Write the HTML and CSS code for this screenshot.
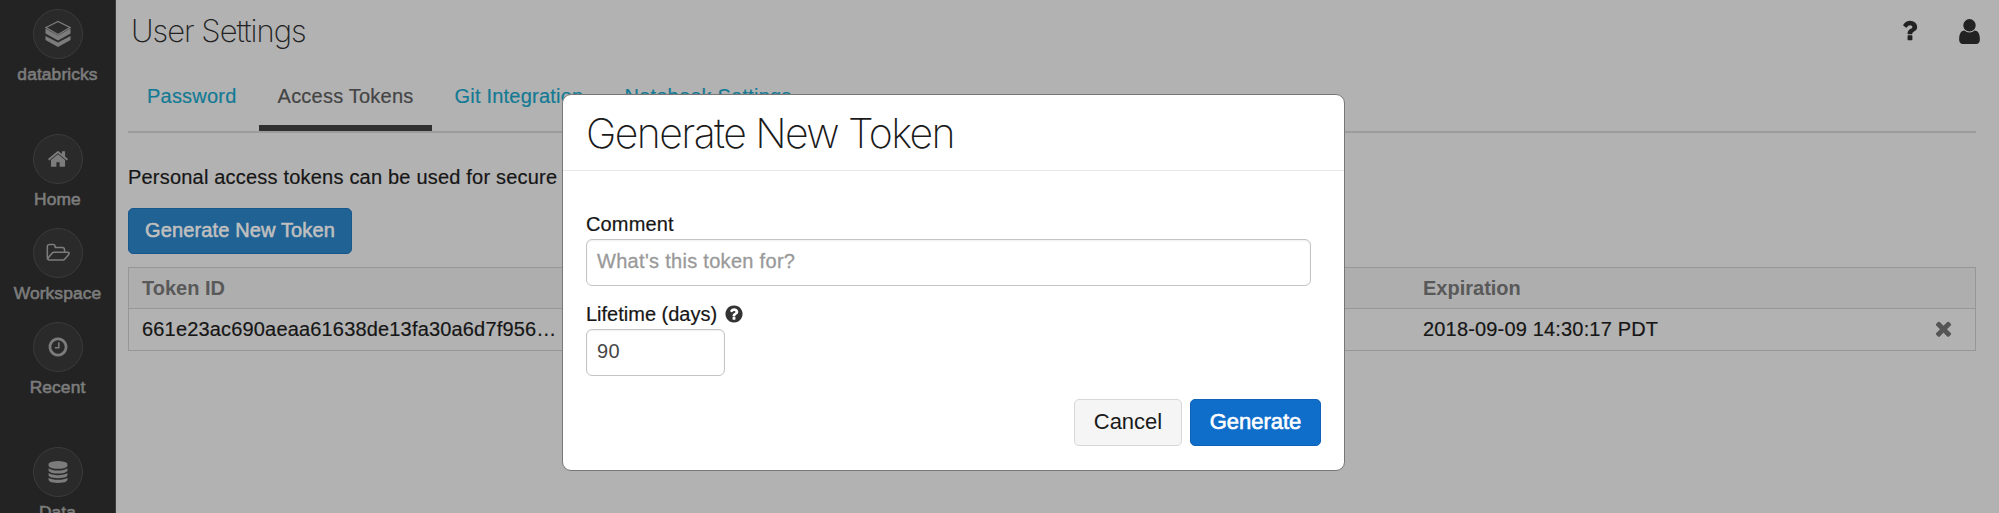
FILE: index.html
```html
<!DOCTYPE html>
<html lang="en">
<head>
<meta charset="utf-8">
<title>User Settings</title>
<link rel="stylesheet" href="styles.css">
</head>
<body>
<div class="app">
  <nav class="sidebar">
    <a class="nav-item nav-brand"><span class="nav-circle"><svg width="26" height="28" viewBox="0 0 26 28"><path d="M1 7.5 13 1.5 25 7.5 13 14.5Z" fill="none" stroke="currentColor" stroke-width="1.3"/><path d="M.5 8.500 13 15.500 25.500 8.500V13.500L13 20.500.5 13.500ZM.5 16 13 22.500 25.500 16V20L13 27 .5 20Z" fill="currentColor"/></svg></span><span class="nav-label">databricks</span></a>
    <a class="nav-item nav-home"><span class="nav-circle"><svg class="icon" viewBox="0 0 1792 1792"><path d="M1472 992v480q0 26-19 45t-45 19h-384v-384h-256v384h-384q-26 0-45-19t-19-45v-480q0-1 .5-3t.5-3l575-474 575 474q1 2 1 6zm223-69l-62 74q-8 9-21 11h-3q-13 0-21-7l-692-577-692 577q-12 8-24 7-13-2-21-11l-62-74q-8-10-7-23.5t11-21.5l719-599q32-26 76-26t76 26l244 204v-195q0-14 9-23t23-9h192q14 0 23 9t9 23v408l219 182q10 8 11 21.500t-7 23.500z"/></svg></span><span class="nav-label">Home</span></a>
    <a class="nav-item"><span class="nav-circle"><svg class="icon icon-wide" viewBox="-64 0 2048 1792"><path d="M1845 931q0-35-53-35h-1088q-40 0-85.500 21.500t-71.500 52.500l-294 363q-18 24-18 40 0 35 53 35h1088q40 0 86-22t71-53l294-363q18-22 18-39zm-1141-163h768v-160q0-40-28-68t-68-28h-576q-40 0-68-28t-28-68v-64q0-40-28-68t-68-28h-320q-40 0-68 28t-28 68v853l256-315q44-53 116-87.500t140-34.500zm1269 163q0 62-46 120l-295 363q-43 53-116 87.500t-140 34.500h-1088q-92 0-158-66t-66-158v-960q0-92 66-158t158-66h320q92 0 158 66t66 158v32h544q92 0 158 66t66 158v160h192q54 0 99 24.500t67 70.500q15 32 15 68z"/></svg></span><span class="nav-label">Workspace</span></a>
    <a class="nav-item"><span class="nav-circle"><svg class="icon" viewBox="0 0 1792 1792"><path d="M1024 544v448q0 14-9 23t-23 9h-320q-14 0-23-9t-9-23v-64q0-14 9-23t23-9h224v-352q0-14 9-23t23-9h64q14 0 23 9t9 23zm416 352q0-148-73-273t-198-198-273-73-273 73-198 198-73 273 73 273 198 198 273 73 273-73 198-198 73-273zm224 0q0 209-103 385.500t-279.500 279.500-385.500 103-385.500-103-279.500-279.500-103-385.500 103-385.500 279.500-279.500 385.500-103 385.500 103 279.500 279.500 103 385.500z"/></svg></span><span class="nav-label">Recent</span></a>
    <a class="nav-item nav-data"><span class="nav-circle"><svg class="icon" viewBox="0 0 1792 1792"><path d="M896 768q237 0 443-43t325-127v170q0 69-103 128t-280 93.500-385 34.500-385-34.500-280-93.500-103-128v-170q119 84 325 127t443 43zm0 768q237 0 443-43t325-127v170q0 69-103 128t-280 93.500-385 34.500-385-34.500-280-93.500-103-128v-170q119 84 325 127t443 43zm0-384q237 0 443-43t325-127v170q0 69-103 128t-280 93.500-385 34.500-385-34.500-280-93.500-103-128v-170q119 84 325 127t443 43zm0-1152q208 0 385 34.500t280 93.500 103 128v128q0 69-103 128t-280 93.500-385 34.500-385-34.500-280-93.500-103-128v-128q0-69 103-128t280-93.500 385-34.500z"/></svg></span><span class="nav-label">Data</span></a>
  </nav>
  <main class="main">
    <header class="topbar">
      <h1 class="page-title">User Settings</h1>
      <div class="top-icons">
        <svg class="icon-help" viewBox="0 0 1792 1792"><path d="M1088 1256v240q0 16-12 28t-28 12h-240q-16 0-28-12t-12-28v-240q0-16 12-28t28-12h240q16 0 28 12t12 28zm316-600q0 54-15.500 101t-35 76.500-55 59.500-57.500 43.500-61 35.500q-41 23-68.500 65t-27.500 67q0 17-12 32.500t-28 15.500h-240q-15 0-25.500-18.500t-10.500-37.500v-45q0-83 65-156.500t143-108.500q59-27 84-56t25-76q0-42-46.500-74t-107.500-32q-65 0-108 29-35 25-107 115-13 16-31 16-12 0-25-8l-164-125q-13-10-15.500-25t5.500-28q160-266 464-266 80 0 161 31t146 83 106 127.500 41 158.500z"/></svg>
        <svg class="icon-user" viewBox="0 0 1792 1792"><path d="M1536 1399q0 109-62.500 187t-150.500 78h-854q-88 0-150.500-78t-62.500-187q0-85 8.500-160.500t31.500-152 58.500-131 94-89 134.500-34.500q131 128 313 128t313-128q76 0 134.500 34.500t94 89 58.500 131 31.500 152 8.500 160.500zm-256-887q0 159-112.500 271.500t-271.500 112.500-271.500-112.500-112.500-271.500 112.500-271.500 271.500-112.500 271.500 112.500 112.500 271.500z"/></svg>
      </div>
    </header>
    <div class="tabs">
      <a class="tab">Password</a>
      <a class="tab tab-active">Access Tokens</a>
      <a class="tab">Git Integration</a>
      <a class="tab">Notebook Settings</a>
    </div>
    <p class="intro">Personal access tokens can be used for secure</p>
    <button class="btn-open">Generate New Token</button>
    <div class="table">
      <div class="row row-head"><span>Token ID</span><span>Expiration</span></div>
      <div class="row"><span class="token">661e23ac690aeaa61638de13fa30a6d7f956…</span><span class="date">2018-09-09 14:30:17 PDT</span><svg class="icon-remove" viewBox="0 0 1792 1792"><path d="M1490 1322q0 40-28 68l-136 136q-28 28-68 28t-68-28l-294-294-294 294q-28 28-68 28t-68-28l-136-136q-28-28-28-68t28-68l294-294-294-294q-28-28-28-68t28-68l136-136q28-28 68-28t68 28l294 294 294-294q28-28 68-28t68 28l136 136q28 28 28 68t-28 68l-294 294 294 294q28 28 28 68z"/></svg></div>
    </div>
  </main>
</div>
<div class="modal">
  <h2 class="modal-title">Generate New Token</h2>
  <div class="modal-body">
    <label class="label" for="comment">Comment</label>
    <input class="field" id="comment" placeholder="What's this token for?">
    <label class="label label-life" for="days">Lifetime (days)<svg class="icon-info" viewBox="0 0 1792 1792"><path d="M1024 1376v-192q0-14-9-23t-23-9h-192q-14 0-23 9t-9 23v192q0 14 9 23t23 9h192q14 0 23-9t9-23zm256-672q0-88-55.500-163t-138.500-116-170-41q-243 0-371 213-15 24 8 42l132 100q7 6 19 6 16 0 25-12 53-68 86-92 34-24 86-24 48 0 85.500 26t37.500 59q0 38-20 61t-68 45q-63 28-115.500 86.500t-52.500 125.500v36q0 14 9 23t23 9h192q14 0 23-9t9-23q0-19 21.500-49.500t54.500-49.500q32-18 49-28.500t46-35 44.500-48 28-60.500 12.500-81zm384 192q0 209-103 385.500t-279.500 279.500-385.500 103-385.500-103-279.500-279.500-103-385.500 103-385.500 279.500-279.500 385.500-103 385.500 103 279.500 279.500 103 385.500z"/></svg></label>
    <input class="field field-days" id="days" value="90">
  </div>
  <div class="modal-actions"><button class="btn btn-cancel">Cancel</button><button class="btn btn-primary">Generate</button></div>
</div>
</body>
</html>
```
FILE: styles.css
```css
* { box-sizing: border-box; }
body {
  margin: 0;
  height: 513px;
  overflow: hidden;
  background: #b2b2b2;
  color: #161616;
  font: 20px/28px "Liberation Sans", Arial, sans-serif;
}
svg { fill: currentColor; display: block; flex: none; }
button, input { font: inherit; margin: 0; }
.app { display: flex; height: 513px; overflow: hidden; }

.sidebar {
  flex: none;
  width: 116px;
  height: 513px;
  overflow: hidden;
  padding-top: 9px;
  background: #232323;
  border-right: 1px solid #3a3a3a;
  color: #7c7c7c;
}
.nav-item { display: flex; flex-direction: column; align-items: center; height: 94px; }
.nav-brand { height: 125px; }
.nav-item:nth-child(4) { height: 125px; }
.nav-circle {
  display: flex;
  align-items: center;
  justify-content: center;
  width: 50px;
  height: 50px;
  border: 1.5px solid #3b3b3b;
  border-radius: 50%;
  background: #2a2a2a;
}
.nav-label { margin-top: 3px; font-size: 17.400px; line-height: 24px; letter-spacing: .1px; -webkit-text-stroke: .6px; }
.icon { width: 22px; height: 22px; }
.icon-wide { width: 25px; }

.main { flex: 1; padding: 0 23px 0 12px; }
.topbar { display: flex; justify-content: space-between; height: 65px; padding-left: 3px; }
.page-title { margin: 9px 0 0; font: 200 31px/44px Inter, sans-serif; letter-spacing: -1px; color: #222; }
.top-icons { display: flex; align-items: flex-start; gap: 32px; margin: 17px -8px 0 0; color: #222; }
.icon-help { width: 27px; height: 27px; }
.icon-user { width: 29px; height: 29px; }
.tabs { display: flex; height: 68px; border-bottom: 2px solid #9c9c9c; color: #127a94; }
.tab { height: 66px; padding: 17px 19px 0; margin-right: 3px; white-space: nowrap; letter-spacing: .22px; -webkit-text-stroke: .2px; }
.tab-active { color: #444; border-bottom: 6px solid #303030; }
.intro { margin: 30px 0 17px; white-space: nowrap; letter-spacing: .2px; -webkit-text-stroke: .2px; }
.btn-open {
  display: block;
  width: 224px;
  height: 46px;
  padding: 0 0 2px;
  border: 1.5px solid #17588c;
  border-radius: 5px;
  background: #206294;
  color: #bfbfbf;
  letter-spacing: .13px;
  -webkit-text-stroke: .6px;
}
.table { margin-top: 13px; border: 1.500px solid #969696; height: 84px; }
.row { display: grid; grid-template-columns: 1281px 1fr auto; align-items: center; height: 42px; padding: 0 20px 3px 13px; }
.row-head { height: 41px; padding-top: 3px; border-bottom: 1px solid #969696; background: #aeaeae; color: #595959; font-weight: bold; }
.token, .date { letter-spacing: .17px; -webkit-text-stroke: .2px; }
.icon-remove { width: 23px; height: 23px; color: #555; }

.modal {
  position: absolute;
  left: 562px;
  top: 94px;
  width: 783px;
  height: 377px;
  border: 1px solid #777;
  border-radius: 9px;
  background: #fff;
}
.modal-title {
  margin: 0;
  height: 76px;
  padding: 14px 0 0 23px;
  border-bottom: 1px solid #e8e8e8;
  font: 200 41px/48px Inter, sans-serif;
  letter-spacing: -1.600px;
  color: #1a1a1a;
}
.modal-body { display: flex; flex-direction: column; padding: 39px 33px 0 23px; }
.label { display: flex; align-items: center; height: 28px; padding-bottom: 1px; letter-spacing: .15px; margin-bottom: 1px; -webkit-text-stroke: .2px; }
.label-life { margin-top: 14px; letter-spacing: 0; }
.icon-info { width: 20px; height: 20px; margin-left: 7px; color: #333; }
.field {
  width: 725px;
  height: 47px;
  padding: 0 10px 2px;
  border: 1.500px solid #c4c4c4;
  border-radius: 6px;
  background: #fff;
  box-shadow: inset 0 1px 2px #0001;
  color: #484848;
  letter-spacing: .3px;
}
.field::placeholder { color: #999; opacity: 1; -webkit-text-stroke: .3px; }
.field-days { width: 139px; }
.modal-actions { display: flex; justify-content: flex-end; gap: 8px; padding: 23px 23px 0 0; }
.btn { height: 47px; padding: 0 0 1px; border-radius: 5px; font-size: 22px; }
.btn-cancel { width: 108px; border: 1.500px solid #d8d8d8; background: #f5f5f5; color: #1a1a1a; }
.btn-primary { width: 131px; border: 1px solid #0f62b8; background: #106ecb; color: #fff; -webkit-text-stroke: .6px; }
```
